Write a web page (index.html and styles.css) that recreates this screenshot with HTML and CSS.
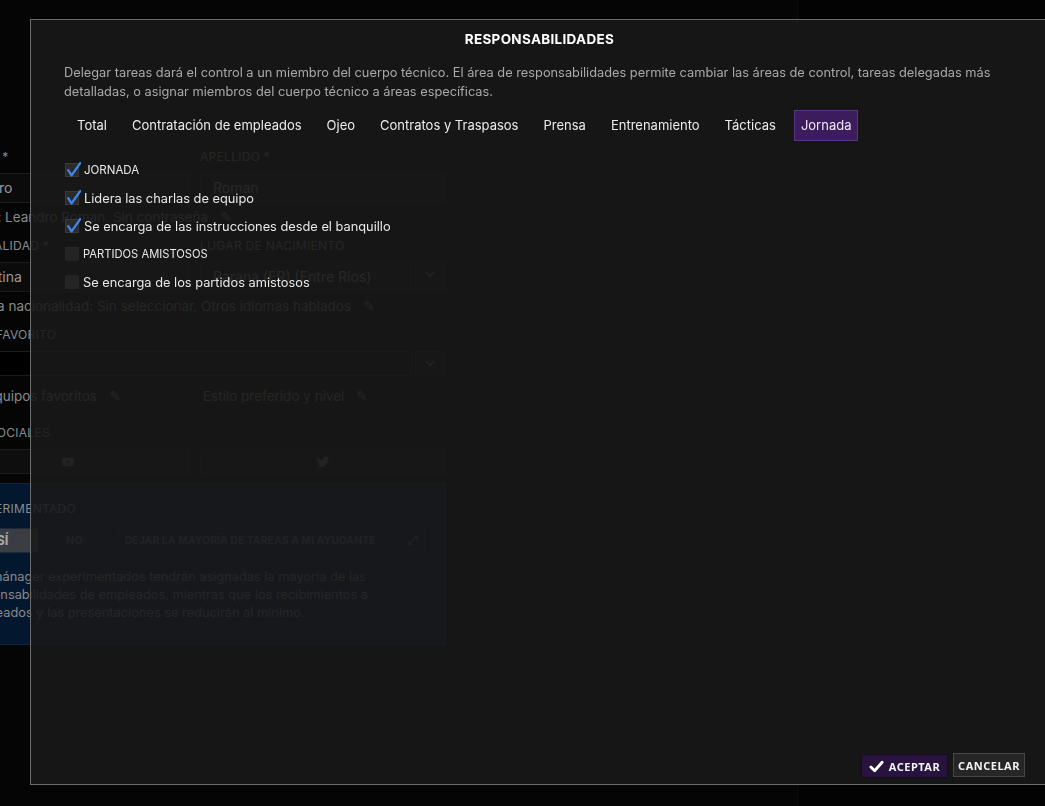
FILE: index.html
```html
<!DOCTYPE html>
<html lang="es">
<head>
    <meta charset="UTF-8">
    <meta name="viewport" content="width=device-width, initial-scale=1.0">
    <title>Responsabilidades</title>
    <link rel="stylesheet" href="styles.css">
</head>
<body>

    <!-- perfil de fondo (queda detrás del diálogo) -->
    <div class="page">
        <div class="form">
            <div class="cols">
                <div class="field">
                    <div class="label">NOMBRE *</div>
                    <div class="input">Leandro</div>
                </div>
                <div class="field">
                    <div class="label">APELLIDO *</div>
                    <div class="input">Roman</div>
                </div>
            </div>
            <div class="note">Usuario: Leandro Roman. Sin contraseña <span class="pen">✎</span></div>
            <div class="cols">
                <div class="field">
                    <div class="label">NACIONALIDAD *</div>
                    <div class="input">Argentina</div>
                </div>
                <div class="field">
                    <div class="label">LUGAR DE NACIMIENTO</div>
                    <div class="select">
                        <div class="input">Paraná (ER) (Entre Ríos)</div>
                        <div class="chev">⌄</div>
                    </div>
                </div>
            </div>
            <div class="note">Segunda nacionalidad: Sin seleccionar, Otros idiomas hablados <span class="pen">✎</span></div>
            <div class="field">
                <div class="label">EQUIPO FAVORITO</div>
                <div class="select">
                    <div class="input black"></div>
                    <div class="chev">⌄</div>
                </div>
            </div>
            <div class="cols note-row">
                <div class="note">Otros equipos favoritos <span class="pen">✎</span></div>
                <div class="note">Estilo preferido y nivel <span class="pen">✎</span></div>
            </div>
            <div class="field social-field">
                <div class="label">REDES SOCIALES</div>
                <div class="cols">
                    <div class="input social">
                        <svg viewBox="0 0 24 24" width="14" height="14"><path fill="currentColor" d="M22 7.5c-.2-1.4-1-2.3-2.4-2.5C17.4 4.7 12 4.7 12 4.7s-5.4 0-7.6.3C3 5.2 2.2 6.1 2 7.5 1.8 9 1.8 12 1.8 12s0 3 .2 4.5c.2 1.4 1 2.3 2.4 2.5 2.2.3 7.6.3 7.6.3s5.4 0 7.6-.3c1.4-.2 2.2-1.1 2.4-2.5.2-1.5.2-4.5.2-4.5s0-3-.2-4.5zM10 15.2V8.8l5.3 3.2L10 15.2z"/></svg>
                    </div>
                    <div class="input social">
                        <svg viewBox="0 0 24 24" width="14" height="14"><path fill="currentColor" d="M23 5c-.8.4-1.7.6-2.6.7.9-.6 1.6-1.4 2-2.5-.9.5-1.9.9-2.9 1.1C18.7 3.4 17.5 3 16.2 3c-2.5 0-4.5 2-4.5 4.5 0 .4 0 .7.1 1C8 8.3 4.7 6.5 2.5 3.8c-.4.7-.6 1.4-.6 2.3 0 1.6.8 2.9 2 3.7-.7 0-1.4-.2-2-.6 0 2.2 1.6 4 3.6 4.4-.4.1-.8.2-1.2.2-.3 0-.6 0-.8-.1.6 1.8 2.2 3.1 4.2 3.1-1.5 1.2-3.5 1.9-5.6 1.9H1c2 1.3 4.4 2 6.9 2 8.3 0 12.8-6.9 12.8-12.8v-.6C21.6 6.7 22.4 5.9 23 5z"/></svg>
                    </div>
                </div>
            </div>
            <div class="panel">
                <div class="label">EXPERIMENTADO</div>
                <div class="choice">
                    <div class="opt on">SÍ</div>
                    <div class="opt">NO</div>
                    <div class="opt wide"><span>DEJAR LA MAYORÍA DE TAREAS A MI AYUDANTE</span><span class="exp">⤢</span></div>
                </div>
                <p>Los mánager experimentados tendrán asignadas la mayoría de las responsabilidades de empleados, mientras que los recibimientos a empleados y las presentaciones se reducirán al mínimo.</p>
            </div>
        </div>
        <div class="side"></div>
    </div>

    <!-- diálogo -->
    <div class="modal">
        <div class="modal-title">RESPONSABILIDADES</div>
        <div class="modal-desc">Delegar tareas dará el control a un miembro del cuerpo técnico. El área de responsabilidades permite cambiar las áreas de control, tareas delegadas más detalladas, o asignar miembros del cuerpo técnico a áreas específicas.</div>

        <div class="tabs">
            <div class="tab">Total</div>
            <div class="tab">Contratación de empleados</div>
            <div class="tab">Ojeo</div>
            <div class="tab">Contratos y Traspasos</div>
            <div class="tab">Prensa</div>
            <div class="tab">Entrenamiento</div>
            <div class="tab">Tácticas</div>
            <div class="tab active">Jornada</div>
        </div>

        <div class="checks">
            <div class="check head on"><span class="box"></span>JORNADA</div>
            <div class="check on"><span class="box"></span>Lidera las charlas de equipo</div>
            <div class="check on"><span class="box"></span>Se encarga de las instrucciones desde el banquillo</div>
            <div class="check head"><span class="box"></span>PARTIDOS AMISTOSOS</div>
            <div class="check"><span class="box"></span>Se encarga de los partidos amistosos</div>
        </div>

        <div class="modal-foot">
            <button class="btn ok">
                <svg viewBox="0 0 16 16" width="15" height="15"><path d="M2 8.5 L6 12.5 L14 3.5" fill="none" stroke="#fff" stroke-width="3" stroke-linecap="round" stroke-linejoin="round"/></svg>
                ACEPTAR
            </button>
            <button class="btn cancel">CANCELAR</button>
        </div>
    </div>

</body>
</html>
```

FILE: styles.css
```css
*{
    box-sizing: border-box;
}
body{
    margin: 0;
    background-color: #050505;
    font-family: Inter, "Noto Sans", sans-serif;
    overflow: hidden;
    height: 806px;
}

/* fondo */
.page{
    display: flex;
    height: 806px;
}
.form{
    width: 852px;
    margin-left: -55px;
    padding-top: 148px;
    display: flex;
    flex-direction: column;
    color: #8a8a8a;
    font-size: 13px;
}
.form > *{
    width: 500px;
}
.cols{
    display: grid;
    grid-template-columns: 245px 245px;
    gap: 10px;
}
.label{
    font-size: 12px;
    letter-spacing: .3px;
    color: #8c8c8c;
    height: 18px;
    line-height: 18px;
    margin-bottom: 7px;
}
.input{
    height: 30px;
    line-height: 28px;
    padding: 0 12px;
    border: 1px solid #1c1c1c;
    background-color: #0b0b0b;
    color: #9a9a9a;
    font-size: 14px;
}
.input.black{
    background-color: #000;
    height: 25px;
}
.select{
    display: flex;
    gap: 3px;
}
.select .input{
    flex: 1;
}
.chev{
    width: 30px;
    border: 1px solid #1c1c1c;
    background-color: #0b0b0b;
    text-align: center;
    line-height: 16px;
    font-size: 16px;
}
.note{
    height: 28px;
    line-height: 28px;
    margin-bottom: 6px;
    white-space: nowrap;
    padding-left: 3px;
    font-size: 13.5px;
}
.note-row{
    margin-top: 6px;
}
.note-row .note{
    margin-bottom: 0;
}
.social-field{
    margin-top: 14px;
}
.pen{
    margin-left: 8px;
}
.input.social{
    height: 25px;
    display: flex;
    justify-content: center;
    align-items: center;
    background-color: #0e0e0e;
    color: #777;
}
.panel{
    margin-top: 9px;
    width: 501px !important;
    height: 162px;
    background-color: #03172e;
    border: 1px solid #0a2746;
    padding: 16px 20px 0 20px;
}
.panel .label{
    margin-left: 5px;
    margin-bottom: 10px;
}
.choice{
    display: flex;
    gap: 3px;
}
.opt{
    height: 25px;
    line-height: 23px;
    border: 1px solid #1d2a3a;
    font-size: 11px;
    font-weight: 700;
    color: #5d6a7a;
    width: 65px;
    text-align: center;
}
.opt.on{
    background-color: #3a3d42;
    color: #aaa;
    width: 73px;
    font-size: 13px;
}
.opt.wide{
    width: 308px;
    margin-left: 8px;
    padding: 0 6px;
    display: flex;
    justify-content: space-between;
    font-size: 10.5px;
}
.exp{
    font-size: 13px;
}
.panel p{
    margin: 15px 0 0 0;
    font-size: 12.8px;
    line-height: 18px;
}
.side{
    flex: 1;
    border-left: 1px solid #0c0c0c;
    background-color: #030303;
}

/* diálogo */
.modal{
    position: fixed;
    top: 19px;
    left: 30px;
    right: 0;
    bottom: 21px;
    background-color: rgba(25, 25, 25, 0.885);
    border: 1px solid #6c6c6c;
    border-right: none;
    padding: 0 20px 0 33px;
    display: flex;
    flex-direction: column;
    color: #e6e6e6;
}
.modal-title{
    text-align: center;
    font-weight: 700;
    font-size: 13.5px;
    color: #fff;
    letter-spacing: .3px;
    padding-top: 11px;
    height: 40px;
    padding-right: 10px;
}
.modal-desc{
    font-size: 12.8px;
    line-height: 19px;
    color: #a9a9a9;
    padding-top: 3px;
}
.tabs{
    display: flex;
    gap: 11px;
    margin: 9px 0 0 6px;
}
.tab{
    height: 31px;
    line-height: 29px;
    padding: 0 6px;
    font-size: 13px;
    color: #ececec;
    border: 1px solid transparent;
}
.tab.active{
    background-color: #3c1c5c;
    border-color: #5a3383;
    color: #f0e8f8;
}
.checks{
    margin-top: 15px;
    display: flex;
    flex-direction: column;
}
.check{
    position: relative;
    height: 28px;
    display: flex;
    align-items: center;
    font-size: 12.8px;
    color: #e8e8e8;
}
.check.head{
    font-size: 11.5px;
}
.check.head:not(.on){
    font-size: 11.2px;
}
.box{
    position: relative;
    width: 14px;
    height: 14px;
    margin: 0 5px 0 1px;
    background-color: #2a2a2a;
    border: 1px solid #3a3a3a;
}
.check:not(.on) .box{
    background-color: #242424;
    border-color: #262626;
    margin-right: 4px;
}
.check.on .box::after{
    content: "";
    position: absolute;
    left: 1px;
    top: -2px;
    width: 14px;
    height: 15px;
    background: url("data:image/svg+xml;utf8,<svg xmlns='http://www.w3.org/2000/svg' viewBox='0 0 14 15'><path d='M1.2 8.2 L4.6 13.4 L13.4 0.8' fill='none' stroke='%233d86ec' stroke-width='2.3' stroke-linecap='round' stroke-linejoin='round'/></svg>") no-repeat;
}
.modal-foot{
    margin-top: auto;
    display: flex;
    justify-content: flex-end;
    align-items: center;
    gap: 5px;
    padding-bottom: 6px;
}
.btn{
    font-family: "Noto Sans", Inter, sans-serif;
    font-weight: 700;
    font-size: 11px;
    letter-spacing: .5px;
    color: #f2f2f2;
    cursor: pointer;
    display: flex;
    align-items: center;
    justify-content: center;
}
.btn.ok{
    width: 87px;
    height: 24px;
    margin-top: 2px;
    gap: 5px;
    background-color: #28133f;
    border: 1px solid #160a24;
}
.btn.cancel{
    width: 72px;
    height: 24px;
    background-color: #262626;
    border: 1px solid #474747;
}
```
